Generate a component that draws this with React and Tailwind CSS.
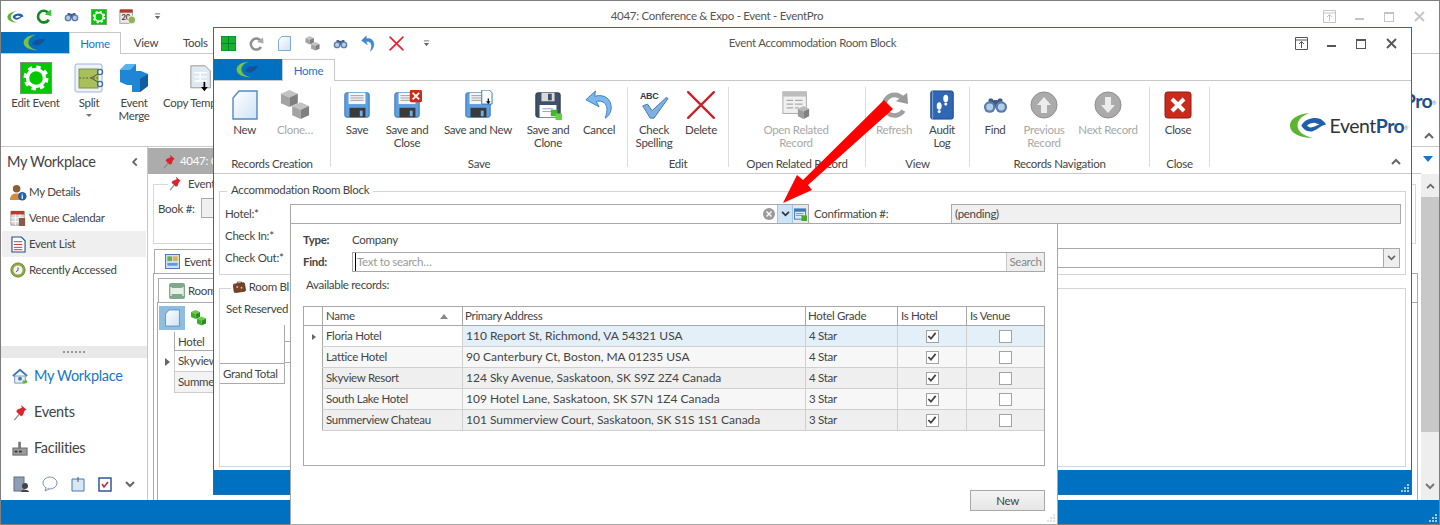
// App.jsx — EventPro main window with the Event Accommodation Room Block dialog on top.
// The dialog and its hotel lookup popup are real overlapping windows, so those
// two (plus the red annotation arrow) are absolutely placed. Everything else is flow.

// --- small drawn icons ---
function LogoMark({ className }) {
  return (
    <svg viewBox="0 0 40 28" className={className}>
      <path d="M22 1C10 1 1 7 1 14c0 8 10 13 24 13-9-2-16-6-16-13C9 8 14 3 22 1z" fill="#5cb531" />
      <path d="M13 14c3-6 9-8 15-8 5 0 9 3 11 7-6 1-8 5-14 7-6 1-10-2-12-6z" fill="#1f5fae" />
      <path d="M19 14c2-2 5-3 8-3l5 2c-3 1-6 3-9 3-2 0-3-1-4-2z" fill="#fff" />
    </svg>
  )
}

function SmallLogo() {
  return (
    <svg viewBox="0 0 40 28" className="w-[24px] h-[17px]">
      <path d="M22 1C10 1 1 7 1 14c0 8 10 13 24 13-9-2-16-6-16-13C9 8 14 3 22 1z" fill="#7cc242" />
      <path d="M15 15c4-5 9-7 22-7-3 5-8 11-15 11-4 0-6-2-7-4z" fill="#14539c" />
    </svg>
  )
}

function GearBox({ className }) {
  return (
    <svg viewBox="0 0 32 32" className={className}>
      <rect x="0.5" y="0.5" width="31" height="31" fill="#00c900" stroke="#8a8a8a" />
      <circle cx="16" cy="16" r="10.5" fill="none" stroke="#fff" strokeWidth="4" strokeDasharray="4.2 4.05" />
      <circle cx="16" cy="16" r="8.5" fill="none" stroke="#fff" strokeWidth="3.4" />
    </svg>
  )
}

function RefreshIcon({ className, color = '#8f8f8f', dark = '#a9a9a9' }) {
  return (
    <svg viewBox="0 0 32 32" className={className}>
      <path d="M26 22a11 11 0 1 1-1-13" fill="none" stroke={color} strokeWidth="5" />
      <path d="M18 12l13 3-1-12z" fill={dark} />
    </svg>
  )
}

function Binoculars({ className }) {
  return (
    <svg viewBox="0 0 32 22" className={className}>
      <path d="M11 4h10v10H11z" fill="#3e5a85" />
      <rect x="7" y="2" width="6" height="6" rx="2" fill="#3e5a85" />
      <rect x="19" y="2" width="6" height="6" rx="2" fill="#3e5a85" />
      <circle cx="8.5" cy="13" r="7.5" fill="#5b7cae" />
      <circle cx="23.5" cy="13" r="7.5" fill="#5b7cae" />
      <circle cx="8.5" cy="13" r="4.5" fill="#b6cdea" />
      <circle cx="23.5" cy="13" r="4.5" fill="#b6cdea" />
    </svg>
  )
}

function CalendarIcon({ className }) {
  return (
    <svg viewBox="0 0 20 20" className={className}>
      <rect x="1" y="3" width="15" height="15" fill="#e8e8e8" stroke="#999" />
      <rect x="1" y="1.5" width="15" height="4" fill="#b03a2e" />
      <text x="3" y="14.5" fontSize="9" fontWeight="700" fill="#333">20</text>
      <circle cx="15" cy="14" r="4.6" fill="#8fb356" stroke="#fff" />
    </svg>
  )
}

function WinSquares({ className }) {
  return (
    <svg viewBox="0 0 16 16" className={className}>
      <rect width="16" height="16" fill="#0c7c2c" />
      <rect x="0.5" y="0.5" width="7" height="7" fill="#12b42e" />
      <rect x="8.5" y="0.5" width="7" height="7" fill="#12b42e" />
      <rect x="0.5" y="8.5" width="7" height="7" fill="#12b42e" />
      <rect x="8.5" y="8.5" width="7" height="7" fill="#12b42e" />
    </svg>
  )
}

function NewDoc({ className }) {
  return (
    <svg viewBox="0 0 26 30" className={className}>
      <defs>
        <linearGradient id="docFill" x1="0" y1="0" x2="1" y2="1">
          <stop offset="0" stopColor="#ffffff" />
          <stop offset="1" stopColor="#cfe2f5" />
        </linearGradient>
      </defs>
      <path d="M7 1h18v28H1V8z" fill="url(#docFill)" stroke="#4f8ac6" strokeWidth="1.4" />
    </svg>
  )
}

function Cubes({ className, color = '#a3a3a3', shade = '#7f7f7f', top = '#c2c2c2' }) {
  const cube = (x, y) => (
    <g transform={`translate(${x} ${y})`}>
      <path d="M0 4l9-4 9 4-9 4z" fill={top} />
      <path d="M0 4l9 4v10l-9-4z" fill={color} />
      <path d="M18 4l-9 4v10l9-4z" fill={shade} />
    </g>
  )
  return (
    <svg viewBox="0 0 30 32" className={className}>
      {cube(0, 0)}
      {cube(12, 13)}
    </svg>
  )
}

function UndoArrow({ className }) {
  return (
    <svg viewBox="0 0 24 28" className={className}>
      <path d="M9 6c8-2 13 3 13 10 0 5-3 9-6 11 2-5 3-9 1-13-2-3-5-4-8-3l2 5L1 9l8-8z" fill="#3d8ad6" stroke="#1f62ad" strokeWidth="0.6" />
    </svg>
  )
}

function RedX({ className, thin }) {
  return (
    <svg viewBox="0 0 28 28" className={className}>
      <path d="M2 2l24 24M26 2L2 26" stroke={thin ? '#c8242a' : '#d6272a'} strokeWidth={thin ? 2.2 : 3} strokeLinecap="round" />
    </svg>
  )
}

function QatMenu() {
  return (
    <svg viewBox="0 0 8 8" className="w-[7px] h-[7px]">
      <path d="M1 1h6" stroke="#666" />
      <path d="M1 3.5h6L4 7z" fill="#666" />
    </svg>
  )
}

// variant: plain | close | new | clone
function Floppy({ className, variant = 'plain' }) {
  const dark = variant === 'clone'
  return (
    <svg viewBox="0 0 32 32" className={className}>
      <rect x="3" y="3" width="26" height="26" rx="2" fill={dark ? '#3f5068' : '#5d9fe0'} stroke={dark ? '#2b3645' : '#3273b8'} />
      {dark ? (
        <>
          <rect x="9" y="3" width="14" height="9" fill="#d9d9d9" />
          <rect x="16" y="4" width="4" height="7" fill="#3f5068" />
          <rect x="7" y="16" width="18" height="13" fill="#fff" />
          <path d="M10 20h11M10 23h11" stroke="#8aa2c2" />
        </>
      ) : (
        <>
          <rect x="7" y="3" width="18" height="12" fill="#f6f6f6" />
          <path d="M9 6h14M9 8.5h14M9 11h14" stroke="#9a9a9a" />
          <rect x="8" y="19" width="17" height="10" fill="#3a3a3a" />
          <rect x="19" y="22" width="3" height="6" fill="#6fb0ea" />
        </>
      )}
      {variant === 'close' && (
        <g>
          <rect x="19" y="0" width="13" height="13" rx="1.5" fill="#cc2a1c" />
          <path d="M22 3l7 7M29 3l-7 7" stroke="#fff" strokeWidth="2" />
        </g>
      )}
      {variant === 'new' && (
        <g>
          <path d="M20 0h8l3 3v12H20z" fill="#fff" stroke="#3273b8" />
          <path d="M27 9v5" stroke="#111" strokeWidth="1.4" />
          <path d="M24.5 12l2.5 3 2.5-3z" fill="#111" />
        </g>
      )}
      {variant === 'clone' && (
        <g>
          <rect x="19" y="21" width="7" height="7" fill="#41b52c" />
          <rect x="24" y="25" width="7" height="7" fill="#62d23a" />
        </g>
      )}
    </svg>
  )
}

function BigUndo({ className }) {
  return (
    <svg viewBox="0 0 32 32" className={className}>
      <path d="M11 6c11-3 19 3 19 13 0 5-3 10-7 12 2-6 3-11 1-15-2-4-7-5-11-4l3 6L1 10 12 0z" fill="#7fb7ea" stroke="#2f78c4" />
    </svg>
  )
}

function SpellCheck({ className }) {
  return (
    <svg viewBox="0 0 32 32" className={className}>
      <text x="1" y="10" fontSize="9.5" fontWeight="700" fill="#23395d" fontFamily="Liberation Sans, sans-serif">ABC</text>
      <path d="M4 17l5-2 5 7L29 8l2 1-15 21h-4z" fill="#7fb0e0" stroke="#3d75b4" />
    </svg>
  )
}

function RelatedRecord({ className }) {
  return (
    <svg viewBox="0 0 32 32" className={className}>
      <rect x="2" y="2" width="25" height="23" fill="#f0f0f0" stroke="#a8a8a8" />
      <rect x="2" y="2" width="25" height="5" fill="#bdbdbd" />
      <path d="M6 11h7M6 15h7M6 19h7M15 11h8M15 15h8M15 19h4" stroke="#aaa" strokeWidth="1.4" />
      <path d="M18 20l6-3 6 3-6 3z" fill="#bbb" />
      <path d="M18 20l6 3v8l-6-3z" fill="#9b9b9b" />
      <path d="M30 20l-6 3v8l6-3z" fill="#808080" />
    </svg>
  )
}

function AuditLog({ className }) {
  return (
    <svg viewBox="0 0 26 32" className={className}>
      <rect x="1" y="1" width="24" height="30" rx="2" fill="#2f67b3" stroke="#1d4684" />
      <path d="M3 1v30" stroke="#83aadf" />
      <ellipse cx="10" cy="17" rx="2.6" ry="4" fill="#fff" />
      <circle cx="10" cy="23" r="1.6" fill="#fff" />
      <ellipse cx="17" cy="9" rx="2.6" ry="4" fill="#fff" />
      <circle cx="17" cy="15" r="1.6" fill="#fff" />
    </svg>
  )
}

function GrayCircleArrow({ className, down }) {
  return (
    <svg viewBox="0 0 28 28" className={className}>
      <circle cx="14" cy="14" r="13" fill="#ababab" stroke="#8f8f8f" />
      <path d={down ? 'M11 6h6v8h4l-7 8-7-8h4z' : 'M11 22h6v-8h4l-7-8-7 8h4z'} fill="#ececec" />
    </svg>
  )
}

function CloseBox({ className }) {
  return (
    <svg viewBox="0 0 28 28" className={className}>
      <rect x="1" y="1" width="26" height="26" rx="2.5" fill="#c92a1c" stroke="#8f1b12" />
      <path d="M8 8l12 12M20 8L8 20" stroke="#fff" strokeWidth="4" />
    </svg>
  )
}

function SplitIcon({ className }) {
  return (
    <svg viewBox="0 0 30 30" className={className}>
      <rect x="1" y="1" width="27" height="28" rx="2" fill="#eef3fa" stroke="#9db6d6" />
      <rect x="5" y="6" width="19" height="19" fill="#a9c05a" stroke="#7f9540" />
      <path d="M5 15h19" stroke="#55652a" strokeDasharray="2 1.5" />
      <circle cx="26" cy="9" r="2.6" fill="none" stroke="#3d6fa8" strokeWidth="1.2" />
      <circle cx="26" cy="21" r="2.6" fill="none" stroke="#3d6fa8" strokeWidth="1.2" />
      <path d="M24 11l-7 4 7 4" fill="none" stroke="#555" />
    </svg>
  )
}

function MergeIcon({ className }) {
  return (
    <svg viewBox="0 0 30 30" className={className}>
      <path d="M7 1h10v7h5l7 3v12l-8 6H13v-7H8L1 19V7z" fill="#1f86d6" />
      <path d="M1 7l6-6h10l-6 6z" fill="#58b4ee" />
      <path d="M21 29v-13l8-5v12z" fill="#125d9f" />
    </svg>
  )
}

function TemplateIcon({ className }) {
  return (
    <svg viewBox="0 0 26 32" className={className}>
      <path d="M1 1h17l6 6v20H1z" fill="#dfe8f3" stroke="#8b8b8b" />
      <path d="M5 9h15M5 14h15M5 19h15M12 9v10" stroke="#fff" strokeWidth="1.6" />
      <path d="M17 20v8" stroke="#000" strokeWidth="2" />
      <path d="M13 26h8l-4 5z" fill="#000" />
    </svg>
  )
}

function PinIcon({ className }) {
  return (
    <svg viewBox="0 0 16 18" className={className}>
      <path d="M2 17l5-6" stroke="#888" strokeWidth="1.3" />
      <path d="M9 1l6 5-2 1-2 5-2 1-5-5 1-2 5-2z" fill="#d9232d" />
    </svg>
  )
}

function PersonIcon() {
  return (
    <svg viewBox="0 0 18 18" className="w-[17px] h-[17px]">
      <circle cx="7" cy="5" r="4" fill="#8f5f34" />
      <path d="M0 17c0-5 3-7 7-7s6 2 6 7z" fill="#d58b3b" />
      <circle cx="13" cy="13" r="4.5" fill="#1f5fae" />
      <path d="M13 12v3.5M13 10.4v.6" stroke="#fff" strokeWidth="1.4" />
    </svg>
  )
}

function VenueCalIcon() {
  return (
    <svg viewBox="0 0 18 18" className="w-[16px] h-[16px]">
      <rect x="1" y="2" width="15" height="15" fill="#d8d8d8" stroke="#999" />
      <rect x="1" y="1" width="15" height="4" fill="#c0392b" />
      <path d="M1 9h15M1 13h15M6 5v12M11 5v12" stroke="#fff" />
      <rect x="10" y="9" width="7" height="9" fill="#8a5a44" />
    </svg>
  )
}

function ListDocIcon() {
  return (
    <svg viewBox="0 0 16 18" className="w-[15px] h-[17px]">
      <path d="M1 1h10l4 4v12H1z" fill="#fff" stroke="#1f4f93" strokeWidth="1.2" />
      <path d="M3 6h9M3 9h9M3 12h9M3 14.5h9" stroke="#b33" />
    </svg>
  )
}

function ClockIcon() {
  return (
    <svg viewBox="0 0 18 18" className="w-[16px] h-[16px]">
      <circle cx="9" cy="9" r="8" fill="#8fa848" stroke="#6b8233" />
      <circle cx="9" cy="9" r="5.2" fill="#f4f4f4" />
      <path d="M9 6v3.4L6.6 11" fill="none" stroke="#444" />
    </svg>
  )
}

function HouseIcon() {
  return (
    <svg viewBox="0 0 18 18" className="w-[16px] h-[16px]">
      <path d="M1 9l8-7 8 7" fill="none" stroke="#3f78b8" strokeWidth="2" />
      <path d="M3 9h12v8H3z" fill="#e8eef5" stroke="#6f8fb3" />
      <circle cx="9" cy="12" r="2.2" fill="#3f78b8" />
      <rect x="12" y="14" width="5" height="3" fill="#5fb83a" />
    </svg>
  )
}

function FactoryIcon() {
  return (
    <svg viewBox="0 0 18 18" className="w-[16px] h-[16px]">
      <rect x="1" y="9" width="16" height="8" fill="#9a9a9a" stroke="#666" />
      <rect x="7" y="2" width="3" height="8" fill="#777" />
      <rect x="3" y="12" width="3" height="2" fill="#333" />
      <rect x="8" y="12" width="3" height="2" fill="#333" />
    </svg>
  )
}

function BedIcon({ className }) {
  return (
    <svg viewBox="0 0 16 16" className={className}>
      <rect width="16" height="16" rx="2" fill="#7fa88c" />
      <rect x="2" y="5" width="12" height="6" fill="#e8f0e8" />
      <path d="M2 4v9M14 4v9" stroke="#e8f0e8" strokeWidth="1.4" />
    </svg>
  )
}

function CaseIcon({ className }) {
  return (
    <svg viewBox="0 0 18 16" className={className}>
      <rect x="1" y="3" width="16" height="12" rx="1.5" fill="#7a4326" stroke="#4a2814" transform="rotate(-8 9 9)" />
      <path d="M6 3V1h6v2" fill="none" stroke="#4a2814" />
      <circle cx="6" cy="8" r="1.3" fill="#d7c09c" />
      <circle cx="12" cy="9" r="1.3" fill="#d7c09c" />
    </svg>
  )
}

function Chevron({ up, className = 'w-[10px] h-[7px]', color = '#666' }) {
  return (
    <svg viewBox="0 0 10 7" className={className}>
      <path d={up ? 'M1 6l4-4 4 4' : 'M1 1l4 4 4-4'} fill="none" stroke={color} strokeWidth="2" />
    </svg>
  )
}

function Grip() {
  return (
    <svg viewBox="0 0 8 8" className="w-[8px] h-[8px]">
      <path d="M6 0h2v2H6zM3 3h2v2H3zM6 3h2v2H6zM0 6h2v2H0zM3 6h2v2H3zM6 6h2v2H6z" fill="#a9c8e6" />
    </svg>
  )
}

function WindowButtons({ faded }) {
  const color = faded ? '#c4c4c4' : '#555'
  return (
    <div className="flex items-center justify-end pr-[5px]">
      <div className="w-[30px] flex justify-center">
        <svg viewBox="0 0 13 13" className="w-[13px] h-[13px]">
          <path d="M.5.5h12v12H.5zM.5 3h12M6.5 11V5M4 7l2.5-2.5L9 7" fill="none" stroke={color} />
        </svg>
      </div>
      <div className="w-[30px] flex justify-center">
        <div className={faded ? 'w-[9px] h-[2px] mt-[4px] bg-[#c4c4c4]' : 'w-[9px] h-[2px] mt-[4px] bg-[#555]'} />
      </div>
      <div className="w-[30px] flex justify-center">
        <div className={faded ? 'w-[10px] h-[10px] border border-t-2 border-[#c4c4c4]' : 'w-[10px] h-[10px] border border-t-2 border-[#555]'} />
      </div>
      <div className="w-[30px] flex justify-center">
        <svg viewBox="0 0 11 11" className="w-[11px] h-[11px]">
          <path d="M1 1l9 9M10 1l-9 9" stroke={color} strokeWidth="1.8" />
        </svg>
      </div>
    </div>
  )
}

function EventProLogo() {
  return (
    <div className="flex items-center shrink-0">
      <LogoMark className="w-[38px] h-[27px]" />
      <span className="ml-[3px] text-[19.5px] leading-[20px] tracking-[-0.5px] text-[#333]">
        Event<span className="font-bold text-[#1d4f8f]">Pro</span>
        <sup className="text-[5px] text-[#888]">®</sup>
      </span>
    </div>
  )
}

// One ribbon button: icon on top, one or two label lines below.
function RibbonBtn({ width, icon, lines, off, menu }) {
  return (
    <div className={`${width} flex flex-col items-center shrink-0`}>
      <div className="h-[36px] flex items-center justify-center">{icon}</div>
      <div className={off ? 'text-center text-[#a8a8a8] whitespace-nowrap leading-[13px]' : 'text-center text-[#444] whitespace-nowrap leading-[13px]'}>
        {lines.map((l) => (
          <div key={l}>{l}</div>
        ))}
      </div>
      {menu && <div className="mt-[5px] w-0 h-0 border-x-[3px] border-x-transparent border-t-[3px] border-t-[#777]" />}
    </div>
  )
}

function RibbonGroup({ width, label, children }) {
  return (
    <div className={`${width} h-[80px] mt-[6px] border-r border-[#dcdcdc] flex flex-col shrink-0`}>
      <div className="flex">{children}</div>
      <div className="mt-auto -mb-[3px] text-center text-[#444] leading-[13px] whitespace-nowrap">{label}</div>
    </div>
  )
}

// --- back window ---
function NavItem({ icon, label, active }) {
  return (
    <div className={active ? 'h-[26px] mx-[1px] pl-[7px] flex items-center gap-[2px] bg-[#efefef] text-[#444]' : 'h-[26px] mx-[1px] pl-[7px] flex items-center gap-[2px] text-[#444]'}>
      <div className="w-[18px] flex justify-center">{icon}</div>
      <span>{label}</span>
    </div>
  )
}

function BigNav({ icon, label, active }) {
  return (
    <div className={active ? 'h-[36px] pl-[11px] flex items-center gap-[6px] text-[14.5px] text-[#1976c8]' : 'h-[36px] pl-[11px] flex items-center gap-[6px] text-[14.5px] text-[#444]'}>
      <div className="w-[16px] flex justify-center">{icon}</div>
      <span>{label}</span>
    </div>
  )
}

function LeftPanel() {
  return (
    <aside className="w-[147px] shrink-0 border-r border-[#c8c8c8] flex flex-col">
      <div className="h-[32px] pb-[2px] pl-[6px] pr-[8px] flex items-center justify-between text-[14.5px] text-[#444]">
        <span>My Workplace</span>
        <Chevron up className="w-[9px] h-[12px] -rotate-90" />
      </div>
      <NavItem icon={<PersonIcon />} label="My Details" />
      <NavItem icon={<VenueCalIcon />} label="Venue Calendar" />
      <NavItem icon={<ListDocIcon />} label="Event List" active />
      <NavItem icon={<ClockIcon />} label="Recently Accessed" />
      <div className="mt-[63px] h-[12px] bg-[#e9e9e9] flex items-center justify-center">
        <div className="w-[22px] border-t-2 border-dotted border-[#999]" />
      </div>
      <div>
        <BigNav icon={<HouseIcon />} label="My Workplace" active />
        <BigNav icon={<PinIcon className="w-[16px] h-[17px]" />} label="Events" />
        <BigNav icon={<FactoryIcon />} label="Facilities" />
      </div>
      <div className="mt-[10px] pl-[12px] flex items-center gap-[13px]">
        <svg viewBox="0 0 16 16" className="w-[16px] h-[16px]">
          <rect x="1" y="1" width="10" height="14" fill="#8f9fb5" stroke="#5f6f85" />
          <circle cx="12" cy="10" r="3" fill="#444" />
          <path d="M8 16c0-3 8-3 8 0z" fill="#444" />
        </svg>
        <svg viewBox="0 0 16 16" className="w-[16px] h-[16px]">
          <ellipse cx="8" cy="7" rx="7" ry="6" fill="#fff" stroke="#7d93ad" />
          <path d="M4 12l-1 3 4-2" fill="#fff" stroke="#7d93ad" />
        </svg>
        <svg viewBox="0 0 14 16" className="w-[14px] h-[16px]">
          <path d="M1 3h12v12H1z" fill="#d9e8f7" stroke="#3f78b8" />
          <path d="M7 1v5" stroke="#555" />
        </svg>
        <svg viewBox="0 0 14 16" className="w-[14px] h-[16px]">
          <rect x="1" y="2" width="12" height="13" fill="#fff" stroke="#1f4f93" strokeWidth="1.4" />
          <path d="M4 8l2 3 4-5" fill="none" stroke="#c0272d" strokeWidth="1.5" />
        </svg>
        <Chevron />
      </div>
    </aside>
  )
}

// Only a strip of this shows left of the dialog, so it only holds what that strip shows.
function BackContent() {
  return (
    <div className="flex-1 flex min-w-0">
      <div className="flex-1 min-w-0 flex flex-col">
        <div className="h-[27px] border-b border-[#c8c8c8] flex items-start justify-between">
          <div className="w-[65px] h-[26px] mt-[1px] bg-[#acacac] pl-[14px] flex items-center gap-[4px] text-white whitespace-nowrap">
            <PinIcon className="w-[14px] h-[15px] shrink-0" />
            <span>4047: C</span>
          </div>
          <svg viewBox="0 0 10 6" className="w-[10px] h-[6px] mt-[9px] mr-[-12px] relative">
            <path d="M0 0h10L5 6z" fill="#1976c8" />
          </svg>
        </div>
        {/* Event details group */}
        <div className="mt-[10px] ml-[5px] mr-[5px] h-[60px] border border-[#d8d8d8] text-[#444]">
          <div className="-mt-[10px] ml-[14px] w-[48px] bg-white flex items-center gap-[6px] whitespace-nowrap">
            <PinIcon className="w-[14px] h-[15px] shrink-0" />
            <span>Event</span>
          </div>
          <div className="mt-[6px] pl-[4px] flex items-center gap-[6px] w-[59px]">
            <span className="shrink-0">Book #:</span>
            <div className="flex-1 h-[20px] bg-[#f0f0f0] border border-[#aaa] border-r-0" />
          </div>
        </div>
        {/* Nested tab pages, mostly hidden behind the dialog */}
        <div className="mt-[5px] ml-[6px] w-[58px] h-[24px] pl-[10px] border-l border-t border-[#aaa] flex items-center gap-[4px] text-[#444] whitespace-nowrap">
          <svg viewBox="0 0 16 16" className="w-[15px] h-[15px] shrink-0">
            <rect x=".5" y=".5" width="15" height="15" fill="#cfe0f2" stroke="#3f78b8" />
            <rect x="2.5" y="2.5" width="5" height="5" fill="#6bb04a" />
            <rect x="8.5" y="2.5" width="5" height="5" fill="#e2b33c" />
            <rect x="2.5" y="9.5" width="11" height="3" fill="#5f9bd6" />
          </svg>
          <span>Event</span>
        </div>
        <div className="flex-1 ml-[5px] mr-[3px] border border-b-0 border-[#aaa] pl-[3px] pt-[4px] flex flex-col min-h-0">
          <div className="ml-[1px] w-[55px] h-[24px] pl-[10px] border-l border-t border-[#aaa] flex items-center gap-[3px] text-[#444] whitespace-nowrap">
            <BedIcon className="w-[16px] h-[16px] shrink-0" />
            <span>Room</span>
          </div>
          <div className="flex-1 border border-b-0 border-r-0 border-[#aaa] pt-[3px] pl-[1px] text-[#444]">
            <div className="flex items-center gap-[6px]">
              <div className="w-[26px] h-[24px] bg-[#8fbde0] flex items-center justify-center">
                <NewDoc className="w-[15px] h-[18px]" />
              </div>
              <Cubes className="w-[15px] h-[16px]" color="#3fae2a" shade="#2f8f1e" top="#63d03f" />
            </div>
            <div className="w-[54px] whitespace-nowrap">
              <div className="ml-[15px] mt-[2px] h-[19px] border-l border-b border-[#aaa] pl-[3px] leading-[19px]">Hotel</div>
              <div className="h-[21px] flex">
                <div className="w-[15px] shrink-0 flex items-center pl-[6px]">
                  <div className="w-0 h-0 border-y-[4px] border-y-transparent border-l-[5px] border-l-[#666]" />
                </div>
                <div className="flex-1 border-l border-b border-[#ccc] pl-[3px] leading-[20px]">Skyview</div>
              </div>
              <div className="h-[21px] flex">
                <div className="w-[15px] shrink-0" />
                <div className="flex-1 border-l border-b border-[#ccc] pl-[3px] leading-[20px] bg-[#f3f3f3]">Summe</div>
              </div>
            </div>
          </div>
        </div>
      </div>
      {/* scrollbar */}
      <div className="w-[18px] shrink-0 bg-[#eeeeee] flex flex-col items-center mt-[27px]">
        <div className="h-[23px] flex items-center"><Chevron up className="w-[9px] h-[6px]" /></div>
        <div className="w-full h-[235px] bg-[#c8c8c8]" />
        <div className="mt-auto h-[17px]"><Chevron className="w-[10px] h-[7px]" color="#777" /></div>
      </div>
    </div>
  )
}

function BackWindow() {
  return (
    <div className="w-full h-full border border-[#7f7f7f] bg-white flex flex-col">
      <div className="h-[31px] shrink-0 grid grid-cols-[1fr_auto_1fr] items-center">
        <div className="flex items-center">
          <div className="w-[28px] flex justify-center"><LogoMark className="w-[17px] h-[12px]" /></div>
          <div className="w-[28px] flex justify-center"><RefreshIcon className="w-[17px] h-[17px]" color="#108a1e" dark="#3ac33d" /></div>
          <div className="w-[28px] flex justify-center"><Binoculars className="w-[15px] h-[10px]" /></div>
          <div className="w-[28px] flex justify-center"><GearBox className="w-[16px] h-[16px]" /></div>
          <div className="w-[28px] flex justify-center"><CalendarIcon className="w-[17px] h-[17px]" /></div>
          <div className="w-[32px] flex justify-center"><QatMenu /></div>
        </div>
        <div className="pr-[6px] pb-[2px] text-[#555]">4047: Conference &amp; Expo - Event - EventPro</div>
        <WindowButtons faded />
      </div>
      <div className="h-[22px] shrink-0 flex items-end border-b border-[#c8c8c8]">
        <div className="w-[68px] h-[21px] bg-[#0070c0] flex items-center justify-center"><SmallLogo /></div>
        <div className="w-[52px] h-[22px] -mb-[1px] bg-white border border-b-0 border-[#c8c8c8] text-[#1976c8] text-center leading-[21px]">Home</div>
        <div className="w-[50px] h-[21px] text-center text-[#444] leading-[21px]">View</div>
        <div className="w-[42px] h-[21px] pl-[12px] text-[#444] leading-[21px] whitespace-nowrap">Tools</div>
      </div>
      <div className="h-[93px] shrink-0 border-b border-[#c8c8c8] flex pt-[6px]">
        <RibbonBtn width="w-[69px]" icon={<GearBox className="w-[32px] h-[32px]" />} lines={['Edit Event']} />
        <RibbonBtn width="w-[38px]" icon={<SplitIcon className="w-[30px] h-[30px]" />} lines={['Split']} menu />
        <RibbonBtn width="w-[52px]" icon={<MergeIcon className="w-[30px] h-[30px]" />} lines={['Event', 'Merge']} />
        <div className="w-[54px] shrink-0 pl-[3px] text-[#444] whitespace-nowrap leading-[13px]">
          <div className="h-[36px] pl-[27px] flex items-center"><TemplateIcon className="w-[22px] h-[31px]" /></div>
          <div>Copy Temp</div>
        </div>
        <div className="flex-1 flex flex-col items-end pr-[3px]">
          <div className="mt-[27px]"><EventProLogo /></div>
          <div className="mt-auto mb-[7px] mr-[2px]"><Chevron up /></div>
        </div>
      </div>
      <div className="flex-1 flex min-h-0">
        <LeftPanel />
        <BackContent />
      </div>
      <div className="h-[24px] shrink-0 bg-[#0070c0] flex items-end justify-end pr-[2px] pb-[2px]"><Grip /></div>
    </div>
  )
}

// --- dialog ---
function FormBoxes() {
  return (
    <div className="flex-1 min-h-0 px-[5px] pt-[17px] text-[#444]">
      <div className="h-[84px] border border-[#d4d4d4]">
        <div className="-mt-[9px] ml-[7px] w-fit px-[4px] bg-white leading-[14px]">Accommodation Room Block</div>
        <div className="pl-[5px] mt-[6px] leading-[22px] whitespace-nowrap">
          <div>Hotel:*</div>
          <div>Check In:*</div>
          <div>Check Out:*</div>
        </div>
      </div>
      <div className="mt-[13px] h-[179px] border border-[#d4d4d4]">
        <div className="-mt-[10px] ml-[11px] w-[60px] px-[2px] bg-white flex items-center gap-[3px] leading-[14px] whitespace-nowrap">
          <CaseIcon className="w-[17px] h-[16px]" />
          <span>Room Bl</span>
        </div>
        <div className="pl-[6px] mt-[6px] leading-[15px] w-[70px] whitespace-nowrap">Set Reserved</div>
        <div className="mt-[9px] h-[39px] flex">
          <div className="w-[65px] border-r border-[#aaa]" />
          <div className="w-[5px]">
            <div className="h-[17px] border-b border-[#aaa]" />
            <div className="h-[21px] border-b border-[#aaa]" />
          </div>
        </div>
        <div className="w-[65px] h-[21px] border-y border-r border-[#aaa] -mt-[1px] pl-[3px] leading-[19px] whitespace-nowrap">Grand Total</div>
      </div>
    </div>
  )
}

function Dialog() {
  return (
    <div className="absolute left-[213px] top-[27px] w-[1199px] h-[468px] border border-[#1a6fb5] bg-white flex flex-col">
      <div className="h-[31px] shrink-0 grid grid-cols-[1fr_auto_1fr] items-center">
        <div className="flex items-center">
          <div className="w-[28px] flex justify-center"><WinSquares className="w-[15px] h-[15px]" /></div>
          <div className="w-[28px] flex justify-center"><RefreshIcon className="w-[16px] h-[16px]" /></div>
          <div className="w-[28px] flex justify-center"><NewDoc className="w-[13px] h-[15px]" /></div>
          <div className="w-[28px] flex justify-center"><Cubes className="w-[15px] h-[15px]" /></div>
          <div className="w-[28px] flex justify-center"><Binoculars className="w-[15px] h-[10px]" /></div>
          <div className="w-[28px] flex justify-center"><UndoArrow className="w-[14px] h-[17px]" /></div>
          <div className="w-[28px] flex justify-center"><RedX className="w-[15px] h-[15px]" /></div>
          <div className="w-[32px] flex justify-center"><QatMenu /></div>
        </div>
        <div className="pb-[2px] text-[#555]">Event Accommodation Room Block</div>
        <WindowButtons />
      </div>
      <div className="h-[22px] shrink-0 flex items-end border-b border-[#c8c8c8]">
        <div className="w-[68px] h-[21px] bg-[#0070c0] flex items-center justify-center"><SmallLogo /></div>
        <div className="w-[53px] h-[22px] -mb-[1px] bg-white border border-b-0 border-[#c8c8c8] text-[#1976c8] text-center leading-[21px]">Home</div>
      </div>
      <div className="h-[93px] shrink-0 border-b border-[#c8c8c8] flex">
        <RibbonGroup width="w-[117px]" label="Records Creation">
          <RibbonBtn width="w-[61px]" icon={<NewDoc className="w-[26px] h-[30px]" />} lines={['New']} />
          <RibbonBtn width="w-[40px]" icon={<Cubes className="w-[30px] h-[30px]" />} lines={['Clone…']} off />
        </RibbonGroup>
        <RibbonGroup width="w-[297px]" label="Save">
          <RibbonBtn width="w-[52px]" icon={<Floppy className="w-[30px] h-[30px]" />} lines={['Save']} />
          <RibbonBtn width="w-[48px]" icon={<Floppy className="w-[30px] h-[30px]" variant="close" />} lines={['Save and', 'Close']} />
          <RibbonBtn width="w-[94px]" icon={<Floppy className="w-[30px] h-[30px]" variant="new" />} lines={['Save and New']} />
          <RibbonBtn width="w-[46px]" icon={<Floppy className="w-[30px] h-[30px]" variant="clone" />} lines={['Save and', 'Clone']} />
          <RibbonBtn width="w-[56px]" icon={<BigUndo className="w-[28px] h-[30px]" />} lines={['Cancel']} />
        </RibbonGroup>
        <RibbonGroup width="w-[101px]" label="Edit">
          <RibbonBtn width="w-[52px]" icon={<SpellCheck className="w-[32px] h-[30px]" />} lines={['Check', 'Spelling']} />
          <RibbonBtn width="w-[42px]" icon={<RedX className="w-[30px] h-[30px]" thin />} lines={['Delete']} />
        </RibbonGroup>
        <RibbonGroup width="w-[137px]" label="Open Related Record">
          <RibbonBtn width="w-[134px]" icon={<RelatedRecord className="w-[30px] h-[30px]" />} lines={['Open Related', 'Record']} off />
        </RibbonGroup>
        <RibbonGroup width="w-[104px]" label="View">
          <RibbonBtn width="w-[56px]" icon={<RefreshIcon className="w-[30px] h-[30px]" color="#a0a0a0" dark="#9a9a9a" />} lines={['Refresh']} off />
          <RibbonBtn width="w-[40px]" icon={<AuditLog className="w-[26px] h-[30px]" />} lines={['Audit', 'Log']} />
        </RibbonGroup>
        <RibbonGroup width="w-[180px]" label="Records Navigation">
          <RibbonBtn width="w-[50px]" icon={<Binoculars className="w-[25px] h-[17px]" />} lines={['Find']} />
          <RibbonBtn width="w-[48px]" icon={<GrayCircleArrow className="w-[28px] h-[28px]" />} lines={['Previous', 'Record']} off />
          <RibbonBtn width="w-[80px]" icon={<GrayCircleArrow className="w-[28px] h-[28px]" down />} lines={['Next Record']} off />
        </RibbonGroup>
        <RibbonGroup width="w-[60px]" label="Close">
          <RibbonBtn width="w-[56px]" icon={<CloseBox className="w-[28px] h-[28px]" />} lines={['Close']} />
        </RibbonGroup>
        <div className="flex-1 flex flex-col items-end pr-[3px]">
          <div className="mt-[31px]"><EventProLogo /></div>
          <div className="mt-auto mb-[8px] mr-[7px]"><Chevron up /></div>
        </div>
      </div>
      <FormBoxes />
      <div className="h-[24px] shrink-0 bg-[#0070c0] flex items-end justify-end pr-[2px] pb-[2px]"><Grip /></div>
    </div>
  )
}

// --- hotel field row and popup ---
function HotelRow() {
  return (
    <div className="absolute left-[290px] top-[204px] w-[1111px] h-[20px] flex text-[#444]">
      <div className="w-[519px] border border-[#a8a8a8] bg-white flex items-stretch justify-end">
        <div className="flex items-center pr-[1px]">
          <svg viewBox="0 0 12 12" className="w-[12px] h-[12px]">
            <circle cx="6" cy="6" r="6" fill="#9a9a9a" />
            <path d="M3.5 3.5l5 5M8.5 3.5l-5 5" stroke="#fff" strokeWidth="1.4" />
          </svg>
        </div>
        <div className="w-[16px] ml-[1px] bg-[#cce4f7] border-x border-[#9fc6e6] flex items-center justify-center"><Chevron className="w-[9px] h-[6px]" color="#333" /></div>
        <div className="w-[15px] bg-[#e8e8e8] flex items-center justify-center">
          <svg viewBox="0 0 14 14" className="w-[13px] h-[13px]">
            <rect x=".5" y="1" width="12" height="11" fill="#dce9f6" stroke="#3f78b8" />
            <rect x=".5" y="1" width="12" height="3" fill="#3f78b8" />
            <path d="M2 6h8M2 8h8" stroke="#7d93ad" />
            <rect x="8" y="8" width="6" height="6" fill="#3fae2a" />
          </svg>
        </div>
      </div>
      <div className="w-[142px] pl-[5px] leading-[19px]">Confirmation #:</div>
      <div className="flex-1 border border-[#a8a8a8] bg-[#f0f0f0] pl-[3px] leading-[18px]">(pending)</div>
    </div>
  )
}

function CheckCell({ checked, width }) {
  return (
    <div className={`${width} border-l border-[#d0d0d0] flex items-center justify-center`}>
      <div className="w-[13px] h-[13px] border border-[#a3a3a3] bg-white flex items-center justify-center">
        {checked && (
          <svg viewBox="0 0 11 11" className="w-[10px] h-[10px]">
            <path d="M1.5 5.5l2.8 3L9.5 2" fill="none" stroke="#444" strokeWidth="2" />
          </svg>
        )}
      </div>
    </div>
  )
}

const hotels = [
  ['Floria Hotel', '110 Report St, Richmond, VA 54321 USA', '4 Star', 'bg-[#e3eff9]'],
  ['Lattice Hotel', '90 Canterbury Ct, Boston, MA 01235 USA', '4 Star', 'bg-[#f7f7f7]'],
  ['Skyview Resort', '124 Sky Avenue, Saskatoon, SK S9Z 2Z4 Canada', '4 Star', 'bg-[#efefef]'],
  ['South Lake Hotel', '109 Hotel Lane, Saskatoon, SK S7N 1Z4 Canada', '3 Star', 'bg-[#f7f7f7]'],
  ['Summerview Chateau', '101 Summerview Court, Saskatoon, SK S1S 1S1 Canada', '3 Star', 'bg-[#efefef]'],
]

function HotelTable() {
  return (
    <div className="ml-[12px] mt-[14px] w-[742px] h-[160px] border border-[#a8a8a8] bg-white">
      <div className="h-[19px] flex border-b border-[#a8a8a8] leading-[18px]">
        <div className="w-[18px]" />
        <div className="w-[140px] border-l border-[#a8a8a8] pl-[3px] pr-[14px] flex items-center justify-between">
          <span>Name</span>
          <div className="w-0 h-0 border-x-[4px] border-x-transparent border-b-[5px] border-b-[#888]" />
        </div>
        <div className="w-[343px] border-l border-[#a8a8a8] pl-[2px]">Primary Address</div>
        <div className="w-[92px] border-l border-[#a8a8a8] pl-[2px]">Hotel Grade</div>
        <div className="w-[69px] border-l border-[#a8a8a8] pl-[3px]">Is Hotel</div>
        <div className="flex-1 border-l border-[#a8a8a8] pl-[3px]">Is Venue</div>
      </div>
      {hotels.map(([name, addr, grade, bg], i) => (
        <div key={name} className="h-[21px] flex leading-[20px]">
          <div className="w-[18px] flex items-center pl-[8px]">
            {i === 0 && <div className="w-0 h-0 border-y-[3px] border-y-transparent border-l-[4px] border-l-[#666]" />}
          </div>
          <div className={i === 0 ? 'flex-1 flex border-b border-[#d0d0d0]' : `flex-1 flex border-b border-[#d0d0d0] ${bg}`}>
            <div className="w-[140px] border-l border-[#a8a8a8] pl-[3px]">{name}</div>
            <div className={`flex-1 flex ${bg}`}>
              <div className="w-[343px] border-l border-[#d0d0d0] pl-[3px] text-[12px] tracking-normal">{addr}</div>
              <div className="w-[92px] border-l border-[#d0d0d0] pl-[3px]">{grade}</div>
              <CheckCell checked width="w-[69px]" />
              <CheckCell width="flex-1" />
            </div>
          </div>
        </div>
      ))}
    </div>
  )
}

function HotelPopup() {
  return (
    <div className="absolute left-[290px] top-[223px] w-[768px] h-[302px] border border-[#a8a8a8] bg-white text-[#444] flex flex-col">
      <div className="pl-[12px] pt-[8px] flex leading-[15px]">
        <div className="w-[49px] font-bold">Type:</div>
        <div>Company</div>
      </div>
      <div className="pl-[12px] mt-[5px] flex items-center">
        <div className="w-[49px] font-bold">Find:</div>
        <div className="w-[693px] h-[20px] border border-[#a8a8a8] flex justify-between">
          <span className="pl-[1px] border-l border-black ml-[2px] text-[#9a9a9a] leading-[18px]">Text to search…</span>
          <div className="w-[38px] border-l border-[#c8c8c8] bg-[#eeeeee] text-center text-[#888] leading-[18px]">Search</div>
        </div>
      </div>
      <div className="pl-[15px] mt-[5px] leading-[15px]">Available records:</div>
      <HotelTable />
      <div className="mt-[24px] mr-[12px] self-end w-[75px] h-[21px] border border-[#a8a8a8] bg-gradient-to-b from-[#f4f4f4] to-[#e6e6e6] text-center leading-[20px]">New</div>
      <div className="absolute right-[2px] bottom-[2px] opacity-50 grayscale"><Grip /></div>
    </div>
  )
}

export default function App() {
  return (
    <div className="relative w-[1440px] h-[525px] overflow-hidden bg-white text-[11.5px] tracking-[-0.3px] font-['Lato',sans-serif]">
      <BackWindow />
      <Dialog />
      <div className="absolute left-[960px] top-[248px] w-[440px] h-[20px] border border-[#a8a8a8] bg-white flex justify-end">
        <div className="w-[16px] border-l border-[#a8a8a8] bg-[#eeeeee] flex items-center justify-center"><Chevron className="w-[9px] h-[6px]" /></div>
      </div>
      <HotelRow />
      <HotelPopup />
      {/* red annotation arrow */}
      <svg viewBox="0 0 1440 525" className="absolute inset-0 w-[1440px] h-[525px] pointer-events-none">
        <path d="M783 203L797 175 803 180 884 100 893 109 808 185 812 190z" fill="#ff0000" />
      </svg>
    </div>
  )
}
